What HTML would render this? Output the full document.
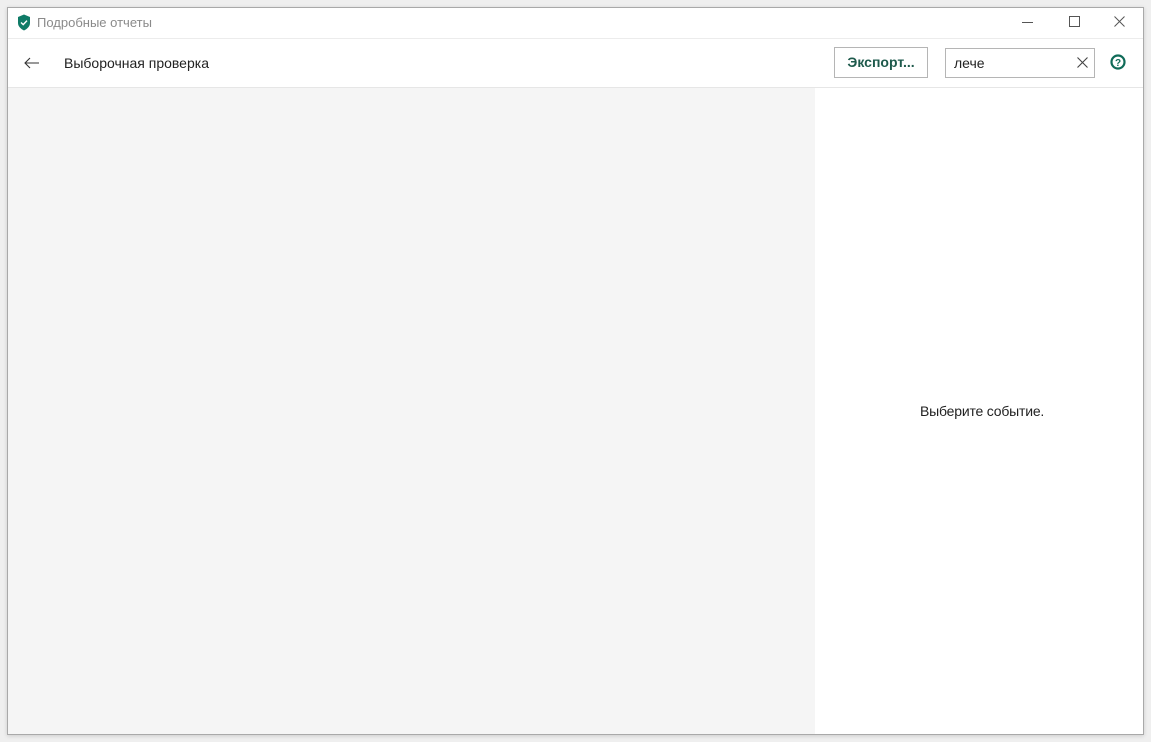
<!DOCTYPE html>
<html><head><meta charset="utf-8"><style>
body{margin:0;width:1151px;height:742px;background:#efefef;font-family:"Segoe UI","Liberation Sans","DejaVu Sans",sans-serif;position:relative;overflow:hidden}
.win{position:absolute;left:7px;top:7px;width:1135px;height:726px;background:#fff;border:1px solid #a9a9a9;box-shadow:0 1px 4px rgba(0,0,0,.15)}
.t{position:absolute;white-space:nowrap}
</style></head><body>
<div class="win">
<svg class="t" style="left:9px;top:6px" width="14" height="17" viewBox="0 0 14 17"><path d="M7 0.5 L13 3 V9 C13 12.5 10 15 7 16.5 C4 15 1 12.5 1 9 V3 Z" fill="#0f7b67"/><path d="M4 8.5 L6.2 10.6 L10 6.6" stroke="#fff" stroke-width="1.4" fill="none"/></svg>
<div class="t" style="left:29px;top:7px;font-size:13px;color:#8a8a8a">Подробные отчеты</div>
<div class="t" style="left:1014px;top:14px;width:11px;height:1px;background:#555"></div>
<div class="t" style="left:1061px;top:8px;width:9px;height:9px;border:1px solid #555"></div>
<svg class="t" style="left:1106px;top:8px" width="11" height="11"><path d="M0.5 0.5L10.5 10.5M10.5 0.5L0.5 10.5" stroke="#555" stroke-width="1"/></svg>
<div class="t" style="left:0;top:30px;width:1135px;height:1px;background:#ececec"></div>
<svg class="t" style="left:16px;top:49px" width="16" height="12"><path d="M1 6H15M6 1L1 6L6 11" stroke="#333" stroke-width="1.1" fill="none"/></svg>
<div class="t" style="left:56px;top:47px;font-size:14px;color:#222">Выборочная проверка</div>
<div class="t" style="left:826px;top:39px;width:92px;height:29px;border:1px solid #b5b5b5;text-align:center;line-height:29px;font-size:14px;font-weight:bold;color:#1e5a4c">Экспорт...</div>
<div class="t" style="left:937px;top:40px;width:148px;height:28px;border:1px solid #b5b5b5;"></div>
<div class="t" style="left:946px;top:47px;font-size:14px;color:#222">лече</div>
<svg class="t" style="left:1069px;top:49px" width="11" height="11"><path d="M0.5 0.5L10.5 10.5M10.5 0.5L0.5 10.5" stroke="#444" stroke-width="1.1"/></svg>
<svg class="t" style="left:1102px;top:46px" width="16" height="16"><circle cx="8" cy="8" r="6.5" stroke="#0f6b58" stroke-width="2.2" fill="none"/><text x="8" y="12" font-size="10" font-weight="bold" fill="#0f6b58" text-anchor="middle" font-family="Liberation Sans">?</text></svg>
<div class="t" style="left:0;top:79px;width:1135px;height:1px;background:#e6e6e6"></div>
<div class="t" style="left:0;top:80px;width:807px;height:646px;background:#f5f5f5"></div>
<div class="t" style="left:912px;top:395px;font-size:14px;color:#222;letter-spacing:-0.2px">Выберите событие.</div>
</div>
</body></html>
